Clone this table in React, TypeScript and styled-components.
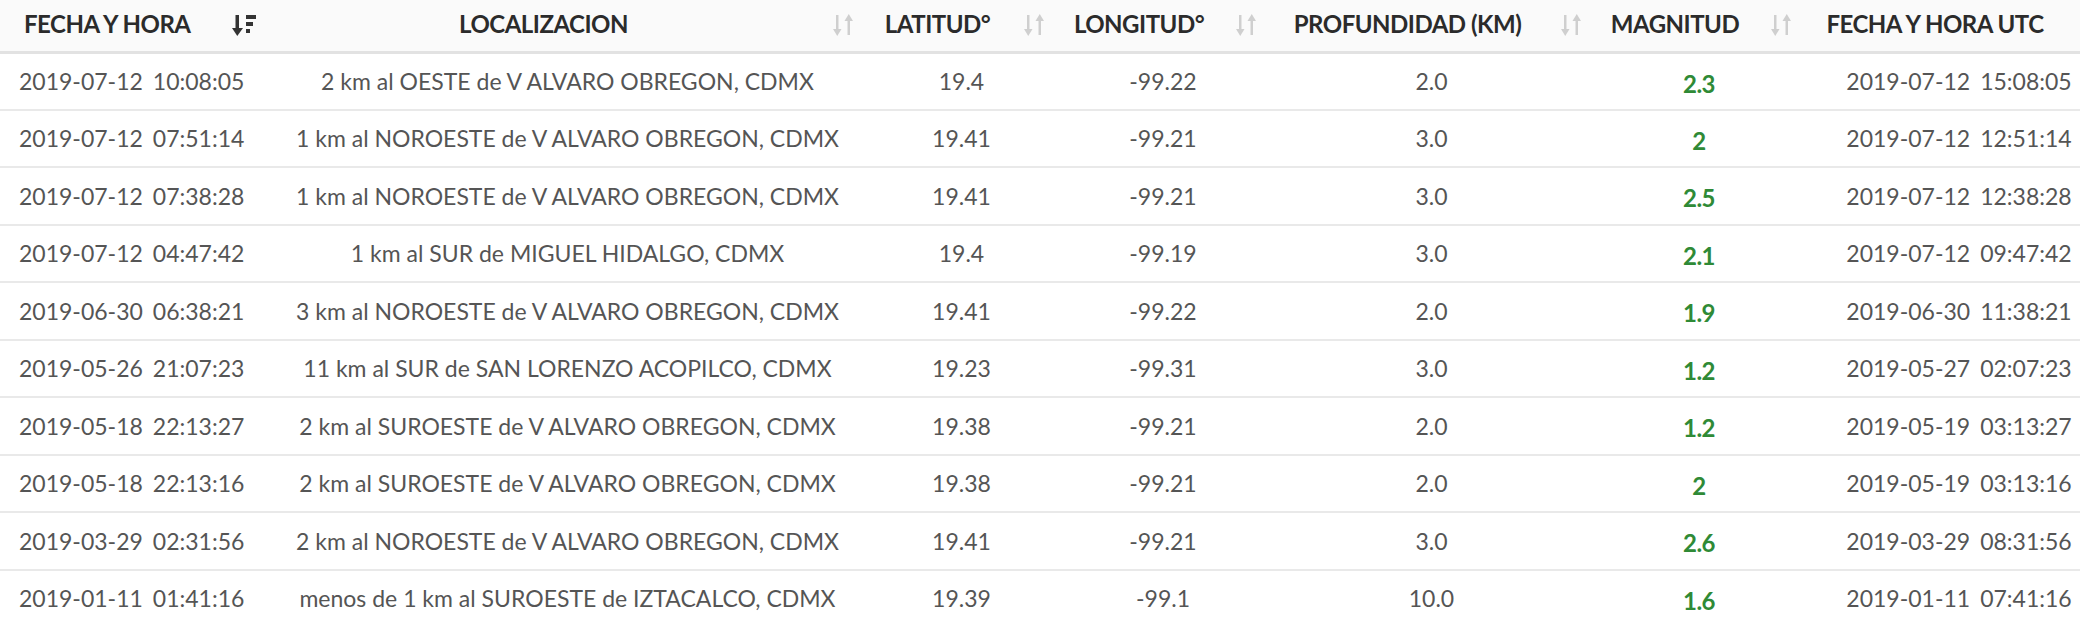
import React from "react";
import styled, { createGlobalStyle } from "styled-components";

const Global = createGlobalStyle`
  html, body { margin: 0; padding: 0; background: #ffffff; }
  body { overflow: hidden; width: 2080px; height: 620px; }
`;

const Wrap = styled.div`
  width: 2080px;
  height: 620px;
  overflow: hidden;
  font-family: Lato, "Open Sans", sans-serif;
`;

const Table = styled.table`
  width: 2110px;
  table-layout: fixed;
  border-collapse: collapse;
`;

const HeadRow = styled.tr`
  height: 52px;
  background: #fafafa;
`;

const BodyRow = styled.tr`
  height: 57.5px;
`;

const HeadCell = styled.th<{ $align?: string }>`
  position: relative;
  padding: 0 40px 2px ${(p) => (p.$align === "left" ? "24px" : "0")};
  text-align: ${(p) => p.$align || "center"};
  font-size: 24px;
  line-height: 28px;
  font-weight: 700;
  color: #2b2b2b;
  letter-spacing: -0.5px;
  border-bottom: 3px solid #e2e2e2;
  white-space: nowrap;
`;

const Cell = styled.td<{ $align?: string; $mag?: boolean }>`
  padding: ${(p) => (p.$mag ? "5px" : "0")} 10px 0 ${(p) => (p.$align === "left" ? "19px" : "18px")};
  text-align: ${(p) => p.$align || "center"};
  font-size: ${(p) => (p.$mag ? "24px" : "23px")};
  line-height: 28px;
  font-weight: ${(p) => (p.$mag ? 700 : 400)};
  color: ${(p) => (p.$mag ? "#2f8a36" : "#555555")};
  letter-spacing: ${(p) => (p.$mag ? "-0.5px" : "0")};
  border-bottom: 2px solid #e9e9e9;
  white-space: nowrap;
`;

const SortIcon = styled.span<{ $active?: boolean }>`
  position: absolute;
  right: 8px;
  top: 50%;
  transform: translateY(-50%);
  display: flex;
  color: ${(p) => (p.$active ? "#333333" : "#cfcfcf")};
`;

const Spacer = styled.span`
  display: inline-block;
  width: 10px;
`;

const ActiveSort = () => (
  <svg width="26" height="26" viewBox="0 0 26 26">
    <rect x="4.5" y="3" width="3.5" height="15" fill="currentColor" />
    <path d="M1 16 L12 16 L6.25 24 Z" fill="currentColor" />
    <rect x="15" y="3" width="10" height="4" fill="currentColor" />
    <rect x="15" y="10" width="7" height="4" fill="currentColor" />
    <rect x="15" y="17" width="4" height="4" fill="currentColor" />
  </svg>
);

const BothSort = () => (
  <svg width="22" height="26" viewBox="0 0 22 26">
    <rect x="4" y="3" width="2.5" height="16" fill="currentColor" />
    <path d="M1 17 L9.5 17 L5.25 24 Z" fill="currentColor" />
    <rect x="15.5" y="7" width="2.5" height="16" fill="currentColor" />
    <path d="M12.5 9 L21 9 L16.75 2 Z" fill="currentColor" />
  </svg>
);

type Row = {
  date: string;
  time: string;
  loc: string;
  lat: string;
  lon: string;
  depth: string;
  mag: string;
  utcDate: string;
  utcTime: string;
};

const rows: Row[] = [
  { date: "2019-07-12", time: "10:08:05", loc: "2 km al OESTE de V ALVARO OBREGON, CDMX", lat: "19.4", lon: "-99.22", depth: "2.0", mag: "2.3", utcDate: "2019-07-12", utcTime: "15:08:05" },
  { date: "2019-07-12", time: "07:51:14", loc: "1 km al NOROESTE de V ALVARO OBREGON, CDMX", lat: "19.41", lon: "-99.21", depth: "3.0", mag: "2", utcDate: "2019-07-12", utcTime: "12:51:14" },
  { date: "2019-07-12", time: "07:38:28", loc: "1 km al NOROESTE de V ALVARO OBREGON, CDMX", lat: "19.41", lon: "-99.21", depth: "3.0", mag: "2.5", utcDate: "2019-07-12", utcTime: "12:38:28" },
  { date: "2019-07-12", time: "04:47:42", loc: "1 km al SUR de MIGUEL HIDALGO, CDMX", lat: "19.4", lon: "-99.19", depth: "3.0", mag: "2.1", utcDate: "2019-07-12", utcTime: "09:47:42" },
  { date: "2019-06-30", time: "06:38:21", loc: "3 km al NOROESTE de V ALVARO OBREGON, CDMX", lat: "19.41", lon: "-99.22", depth: "2.0", mag: "1.9", utcDate: "2019-06-30", utcTime: "11:38:21" },
  { date: "2019-05-26", time: "21:07:23", loc: "11 km al SUR de SAN LORENZO ACOPILCO, CDMX", lat: "19.23", lon: "-99.31", depth: "3.0", mag: "1.2", utcDate: "2019-05-27", utcTime: "02:07:23" },
  { date: "2019-05-18", time: "22:13:27", loc: "2 km al SUROESTE de V ALVARO OBREGON, CDMX", lat: "19.38", lon: "-99.21", depth: "2.0", mag: "1.2", utcDate: "2019-05-19", utcTime: "03:13:27" },
  { date: "2019-05-18", time: "22:13:16", loc: "2 km al SUROESTE de V ALVARO OBREGON, CDMX", lat: "19.38", lon: "-99.21", depth: "2.0", mag: "2", utcDate: "2019-05-19", utcTime: "03:13:16" },
  { date: "2019-03-29", time: "02:31:56", loc: "2 km al NOROESTE de V ALVARO OBREGON, CDMX", lat: "19.41", lon: "-99.21", depth: "3.0", mag: "2.6", utcDate: "2019-03-29", utcTime: "08:31:56" },
  { date: "2019-01-11", time: "01:41:16", loc: "menos de 1 km al SUROESTE de IZTACALCO, CDMX", lat: "19.39", lon: "-99.1", depth: "10.0", mag: "1.6", utcDate: "2019-01-11", utcTime: "07:41:16" },
];

const columns: { label: string; align?: string; active?: boolean }[] = [
  { label: "FECHA Y HORA", align: "left", active: true },
  { label: "LOCALIZACION" },
  { label: "LATITUD°" },
  { label: "LONGITUD°" },
  { label: "PROFUNDIDAD (KM)" },
  { label: "MAGNITUD" },
  { label: "FECHA Y HORA UTC" },
];

const widths = [265, 597, 191, 212, 325, 210, 310];

export default function App() {
  return (
    <Wrap>
      <Global />
      <Table>
        <colgroup>
          {widths.map((w, i) => (
            <col key={i} style={{ width: w }} />
          ))}
        </colgroup>
        <thead>
          <HeadRow>
            {columns.map((c) => (
              <HeadCell key={c.label} $align={c.align}>
                {c.label}
                <SortIcon $active={c.active}>{c.active ? <ActiveSort /> : <BothSort />}</SortIcon>
              </HeadCell>
            ))}
          </HeadRow>
        </thead>
        <tbody>
          {rows.map((r, i) => (
            <BodyRow key={i}>
              <Cell $align="left">
                {r.date}
                <Spacer />
                {r.time}
              </Cell>
              <Cell>{r.loc}</Cell>
              <Cell>{r.lat}</Cell>
              <Cell>{r.lon}</Cell>
              <Cell>{r.depth}</Cell>
              <Cell $mag>{r.mag}</Cell>
              <Cell>
                {r.utcDate}
                <Spacer />
                {r.utcTime}
              </Cell>
            </BodyRow>
          ))}
        </tbody>
      </Table>
    </Wrap>
  );
}
